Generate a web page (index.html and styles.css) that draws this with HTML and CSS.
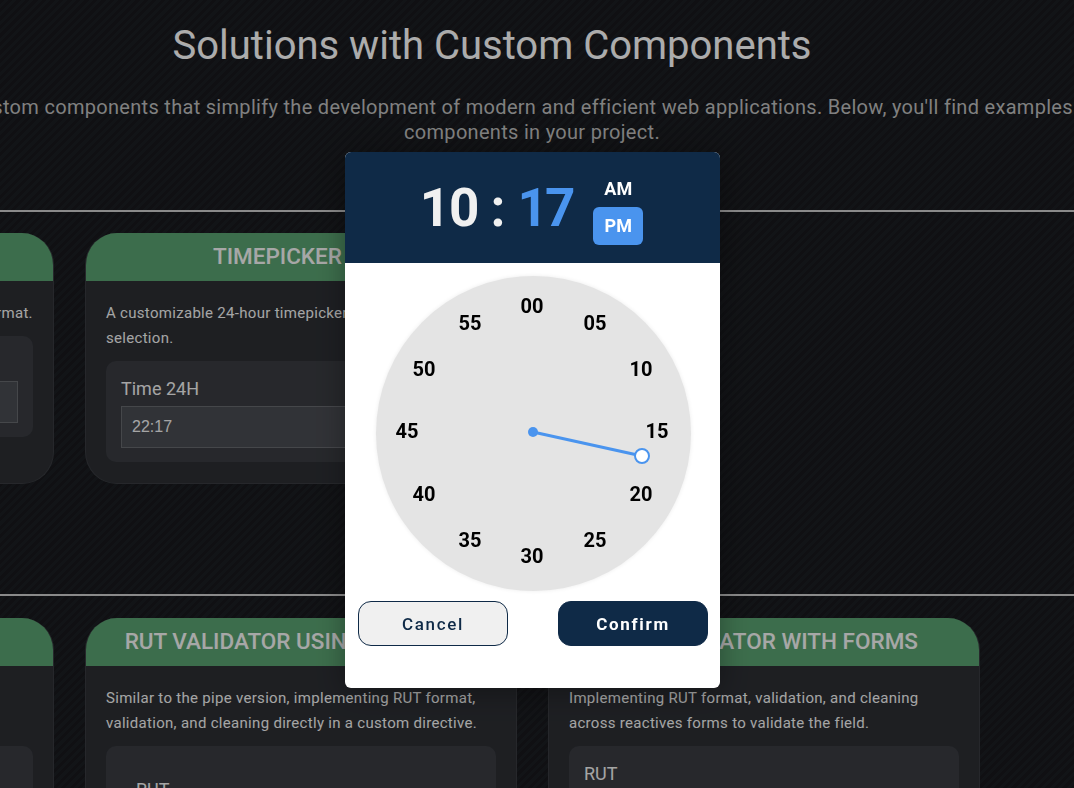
FILE: index.html
```html
<!DOCTYPE html>
<html lang="en">
<head>
    <meta charset="UTF-8">
    <meta name="viewport" content="width=device-width, initial-scale=1.0">
    <title>Solutions with Custom Components</title>
    <link rel="stylesheet" href="styles.css">
</head>
<body>
    <div class="page">
        <h1 class="page-title">Solutions with Custom Components</h1>
        <p class="page-intro">Explore our custom components that simplify the development of modern and efficient web applications. Below, you'll find examples of how to use<br>components in your project.</p>

        <hr class="divider">
        <section class="card-row">
            <article class="card">
                <h2 class="card-title">DATEPICKER CUSTOM</h2>
                <p class="card-text">A customizable date picker with a localized date format.</p>
                <div class="demo">
                    <label class="demo-label">Date</label>
                    <input class="demo-input" type="text" value="">
                </div>
            </article>
            <article class="card">
                <h2 class="card-title">TIMEPICKER 24H</h2>
                <p class="card-text">A customizable 24-hour timepicker with clock-based<br>selection.</p>
                <div class="demo">
                    <label class="demo-label">Time 24H</label>
                    <input class="demo-input" type="text" value="22:17">
                </div>
            </article>
        </section>

        <hr class="divider divider-second">
        <section class="card-row">
            <article class="card">
                <h2 class="card-title">RUT VALIDATOR USING PIPE</h2>
                <p class="card-text">A pipe implementing RUT format, validation,<br>and cleaning for any template.</p>
                <div class="demo"></div>
            </article>
            <article class="card">
                <h2 class="card-title">RUT VALIDATOR USING DIRECTIVE</h2>
                <p class="card-text">Similar to the pipe version, implementing RUT format, validation, and cleaning directly in a custom directive.</p>
                <div class="demo demo-wide">
                    <label class="demo-label">RUT</label>
                </div>
            </article>
            <article class="card">
                <h2 class="card-title">RUT VALIDATOR WITH FORMS</h2>
                <p class="card-text">Implementing RUT format, validation, and cleaning across reactives forms to validate the field.</p>
                <div class="demo">
                    <label class="demo-label">RUT</label>
                </div>
            </article>
        </section>
    </div>

    <!-- Backdrop and time dialog -->
    <div class="backdrop">
        <div class="timepicker">
            <div class="tp-header">
                <div class="tp-time">
                    <span class="tp-hour">10</span>
                    <span class="tp-colon">:</span>
                    <span class="tp-minute">17</span>
                </div>
                <div class="tp-period">
                    <span class="tp-am">AM</span>
                    <span class="tp-pm">PM</span>
                </div>
            </div>

            <div class="tp-clock">
                <span class="tick t00">00</span>
                <span class="tick t05">05</span>
                <span class="tick t10">10</span>
                <span class="tick t15">15</span>
                <span class="tick t20">20</span>
                <span class="tick t25">25</span>
                <span class="tick t30">30</span>
                <span class="tick t35">35</span>
                <span class="tick t40">40</span>
                <span class="tick t45">45</span>
                <span class="tick t50">50</span>
                <span class="tick t55">55</span>
                <svg class="tp-hand" width="315" height="315" viewBox="0 0 315 315">
                    <circle cx="157" cy="156" r="5" fill="#4a94ee"/>
                    <line x1="157" y1="156" x2="266" y2="180" stroke="#4a94ee" stroke-width="3"/>
                    <circle cx="266" cy="180" r="7" fill="#fff" stroke="#4a94ee" stroke-width="2"/>
                </svg>
            </div>

            <div class="tp-actions">
                <button type="button" class="tp-btn tp-cancel">Cancel</button>
                <button type="button" class="tp-btn tp-confirm">Confirm</button>
            </div>
        </div>
    </div>
</body>
</html>
```
FILE: styles.css
```css
html, body {
    margin: 0;
    height: 100%;
    overflow: hidden;
}
body {
    font-family: Roboto, "Liberation Sans", sans-serif;
    background: repeating-linear-gradient(135deg, #17181c 0 3px, #1b1d21 3px 6px);
    color: #f0f0f0;
}
.page {
    width: 1820px;
    margin-left: -378px;
}
.page-title {
    margin: 0;
    padding: 22px 80px 0 0;
    font-size: 40px;
    font-weight: 400;
    line-height: 48px;
    text-align: center;
    color: #f6f6f6;
}
.page-intro {
    margin: 25px 0 0;
    font-size: 20px;
    line-height: 25px;
    letter-spacing: 0.3px;
    text-align: center;
    color: #b8b8b8;
}
.divider {
    margin: 65px 0 21px;
    border: 0;
    height: 2px;
    background: #c6c6c6;
}
.divider-second {
    margin-top: 110px;
    margin-bottom: 22px;
}
.card-row {
    display: flex;
    gap: 31px;
}
.card {
    width: 432px;
    box-sizing: border-box;
    height: 251px;
    background: #2b2d32;
    border: 1px solid #37393e;
    border-top: 0;
    border-radius: 32px;
    overflow: hidden;
    display: flex;
    flex-direction: column;
}
.card-title {
    margin: 0;
    height: 48px;
    flex-shrink: 0;
    font-size: 22.5px;
    font-weight: 500;
    line-height: 47px;
    text-align: center;
    background: #579d6d;
    color: #f0f0f0;
}
.card-text {
    margin: 20px 20px 10px;
    font-size: 15px;
    line-height: 25px;
    letter-spacing: 0.3px;
    color: #ececec;
}
.demo {
    margin: 0 20px;
    padding: 16px 15px 15px;
    height: 70px;
    background: #383a3f;
    border-radius: 10px;
}
.demo-wide {
    padding: 32px 30px;
}
.demo-label {
    display: block;
    font-size: 18px;
    line-height: 24px;
    color: #ececec;
}
.demo-input {
    display: block;
    width: 100%;
    height: 42px;
    margin-top: 5px;
    box-sizing: border-box;
    padding: 0 10px;
    font-family: "Liberation Sans", sans-serif;
    font-size: 16px;
    color: #ececec;
    background: #47494f;
    border: 1px solid #64666b;
}

/* dialog */
.backdrop {
    position: fixed;
    inset: 0;
    background: rgba(0, 0, 0, 0.3);
}
.timepicker {
    position: absolute;
    left: 345px;
    top: 152px;
    width: 375px;
    height: 536px;
    background: #fff;
    border-radius: 6px;
    overflow: hidden;
    box-shadow: 0 4px 30px rgba(0, 0, 0, 0.35);
}
.tp-header {
    height: 111px;
    box-sizing: border-box;
    padding-right: 2px;
    background: #0f2a47;
    display: flex;
    align-items: center;
    justify-content: center;
    gap: 21px;
}
.tp-time {
    display: flex;
    align-items: center;
    gap: 12px;
    font-size: 53px;
    line-height: 60px;
    font-weight: 700;
}
.tp-hour, .tp-colon {
    color: #f0f0f0;
}
.tp-hour {
    letter-spacing: -1px;
}
.tp-minute {
    color: #4a94ee;
    letter-spacing: -3px;
}
.tp-period {
    display: flex;
    flex-direction: column;
    align-items: center;
    margin-top: -2px;
    font-size: 18px;
    font-weight: 700;
    color: #fff;
}
.tp-am {
    line-height: 37px;
    padding-top: 2px;
}
.tp-pm {
    width: 50px;
    height: 38px;
    line-height: 38px;
    text-align: center;
    background: #4a94ee;
    border-radius: 6px;
}
.tp-clock {
    position: relative;
    width: 315px;
    height: 315px;
    margin: 13px 0 0 31px;
    background: #e4e4e4;
    border-radius: 50%;
    box-shadow: 0 0 4px rgba(0, 0, 0, 0.08);
}
.tp-hand {
    position: absolute;
    left: 0;
    top: 0;
}
.tick {
    position: absolute;
    width: 40px;
    margin: -12px 0 0 -20px;
    font-size: 20px;
    font-weight: 700;
    line-height: 24px;
    text-align: center;
    color: #000;
}
.t00 { left: 156px; top: 30px; }
.t05 { left: 219px; top: 47px; }
.t10 { left: 265px; top: 93px; }
.t15 { left: 281px; top: 155px; }
.t20 { left: 265px; top: 218px; }
.t25 { left: 219px; top: 264px; }
.t30 { left: 156px; top: 280px; }
.t35 { left: 94px; top: 264px; }
.t40 { left: 48px; top: 218px; }
.t45 { left: 31px; top: 155px; }
.t50 { left: 48px; top: 93px; }
.t55 { left: 94px; top: 47px; }
.tp-actions {
    display: flex;
    justify-content: space-between;
    margin-top: 10px;
    padding: 0 12px 0 13px;
}
.tp-btn {
    width: 150px;
    height: 45px;
    box-sizing: border-box;
    border-radius: 13px;
    border: 1px solid #0f2a47;
    font-family: Roboto, sans-serif;
    font-size: 17px;
    font-weight: 500;
    letter-spacing: 1.7px;
    cursor: pointer;
}
.tp-cancel {
    background: #f0f0f0;
    color: #0f2a47;
}
.tp-confirm {
    background: #0f2a47;
    color: #fff;
    font-weight: 700;
}
```
